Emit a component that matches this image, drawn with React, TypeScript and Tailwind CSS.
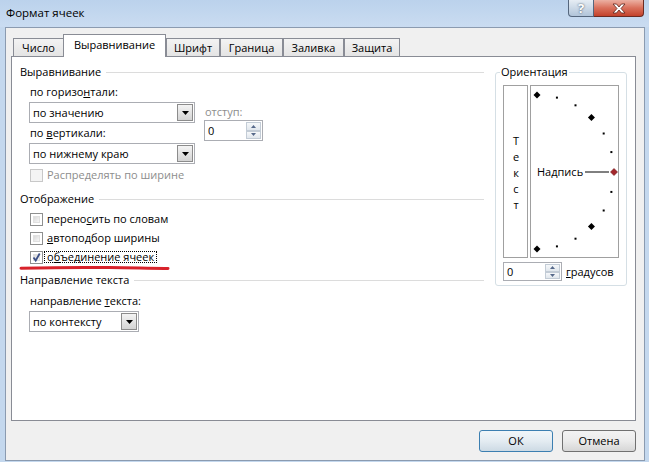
import React from "react"

function Combo({ value, w }: { value: string; w: string }) {
  return (
    <div className={`${w} h-[21px] border border-[#abadb3] bg-white flex`}>
      <div className="flex-1 pl-[3px] flex items-center">{value}</div>
      <div className="w-[16px] my-px mr-px border border-[#8c8c8c] bg-linear-to-b from-[#f4f4f4] to-[#d4d4d4] flex items-center justify-center">
        <svg width="7" height="4" viewBox="0 0 7 4">
          <path d="M0 0h7L3.5 4z" fill="#000" />
        </svg>
      </div>
    </div>
  )
}

function Spin({ w, h }: { w: string; h: string }) {
  return (
    <div className={`${w} ${h} border border-[#abadb3] bg-white flex`}>
      <div className="flex-1 pl-[3px] flex items-center">0</div>
      <div className="w-[15px] flex flex-col m-px">
        <div className="flex-1 border border-[#c3ccd6] bg-linear-to-b from-[#f6f8fa] to-[#e1e7ed] flex items-center justify-center">
          <svg width="5" height="3" viewBox="0 0 5 3">
            <path d="M0 3h5L2.5 0z" fill="#56698a" />
          </svg>
        </div>
        <div className="flex-1 border border-[#c3ccd6] bg-linear-to-b from-[#f6f8fa] to-[#e1e7ed] flex items-center justify-center">
          <svg width="5" height="3" viewBox="0 0 5 3">
            <path d="M0 0h5L2.5 3z" fill="#56698a" />
          </svg>
        </div>
      </div>
    </div>
  )
}

function Check({ checked, disabled }: { checked?: boolean; disabled?: boolean }) {
  if (disabled) {
    return <div className="w-[13px] h-[13px] border border-[#c8c8c8] bg-[#f4f4f4]" />
  }
  return (
    <div className="w-[13px] h-[13px] border border-[#8e8f8f] bg-white p-[2px]">
      <div className="w-full h-full bg-linear-to-br from-[#d9d9d9] to-[#f7f7f7] border border-[#e0e0e0] relative">
        {checked && (
          <svg width="11" height="11" viewBox="0 0 11 11" className="absolute -left-[3px] -top-[3px]">
            <path d="M2.5 5.5l2.2 3 4-7" fill="none" stroke="#3b4f86" strokeWidth="1.8" />
          </svg>
        )}
      </div>
    </div>
  )
}

function GroupTitle({ text }: { text: string }) {
  return (
    <div className="h-[16px] flex items-center">
      <span>{text}</span>
      <div className="flex-1 ml-[5px] border-t border-[#dcdcdc]" />
    </div>
  )
}

function Arc() {
  const cx = 6
  const cy = 86
  const r = 77
  const pts = [90, 75, 60, 45, 30, 15, 0, -15, -30, -45, -60, -75, -90]
  return (
    <svg width="87" height="171" viewBox="0 0 87 171" className="block">
      {pts.map((a) => {
        const x = cx + r * Math.cos((a * Math.PI) / 180)
        const y = cy - r * Math.sin((a * Math.PI) / 180)
        if (a === 0) {
          return <path key={a} d={`M${x} ${y - 3.5}L${x + 3.5} ${y}L${x} ${y + 3.5}L${x - 3.5} ${y}z`} fill="#a3262b" stroke="#6d1014" strokeWidth="0.6" />
        }
        if (a % 45 === 0) {
          return <path key={a} d={`M${x} ${y - 3.5}L${x + 3.5} ${y}L${x} ${y + 3.5}L${x - 3.5} ${y}z`} fill="#000" />
        }
        return <rect key={a} x={x - 1} y={y - 1} width="2" height="2" fill="#000" />
      })}
      <line x1="54" y1="86" x2="78" y2="86" stroke="#000" strokeWidth="1" />
      <text x="6" y="90" fontSize="11" fontFamily="'Open Sans', sans-serif" fill="#000">
        Надпись
      </text>
    </svg>
  )
}

export default function App() {
  const tabs = [
    { label: "Число", w: "w-[51px]" },
    { label: "Выравнивание", w: "w-[103px]", active: true },
    { label: "Шрифт", w: "w-[54px]" },
    { label: "Граница", w: "w-[63px]" },
    { label: "Заливка", w: "w-[61px]" },
    { label: "Защита", w: "w-[56px]" },
  ]

  return (
    <div className="w-[649px] h-[462px] bg-[#c4d8ee] flex flex-col text-[11px] leading-[16px] text-black font-['Open_Sans',sans-serif] overflow-hidden">
      {/* title bar */}
      <div className="h-[27px] flex items-start bg-linear-to-b from-[#bbd2ec] to-[#cadcf1]">
        <div className="pl-[6px] pt-[5px] text-[11.5px]">Формат ячеек</div>
        <div className="ml-auto mr-[5px] flex h-[17px]">
          <div className="w-[26px] h-full border border-[#55667d] border-t-0 rounded-bl-[4px] bg-linear-to-b from-[#e6edf4] to-[#b1c4d9] flex items-center justify-center text-[13px] font-bold text-white [text-shadow:0_0_2px_#2c3a4f]">
            ?
          </div>
          <div className="w-[50px] h-full border border-[#6b2a22] border-t-0 border-l-0 rounded-br-[4px] bg-linear-to-b from-[#ebb0a3] via-[#d96f5b] to-[#c3412b] flex items-center justify-center">
            <svg width="14" height="11" viewBox="0 0 14 11">
              <path d="M1 1h3.5L7 4l2.5-3H13L9 5.5 13 10H9.5L7 7l-2.5 3H1l4-4.5z" fill="#fff" stroke="#5a2219" strokeWidth="0.8" />
            </svg>
          </div>
        </div>
      </div>

      {/* client area */}
      <div className="ml-[5px] mr-[4px] mb-[1px] flex-1 bg-[#f0f0f0] border border-[#8b9bb0] flex flex-col">
        {/* tabs */}
        <div className="flex items-end h-[22px] mt-[6px] ml-[7px] relative z-10">
          {tabs.map((t) =>
            t.active ? (
              <div
                key={t.label}
                className={`${t.w} -ml-px h-[23px] -mb-px bg-white border border-b-0 border-[#898c95] flex items-center justify-center pb-[2px]`}
              >
                {t.label}
              </div>
            ) : (
              <div
                key={t.label}
                className={`${t.w} h-[18px] bg-linear-to-b from-[#f3f3f3] to-[#e4e4e4] border border-b-0 border-[#898c95] flex items-center justify-center`}
              >
                {t.label}
              </div>
            )
          )}
        </div>

        {/* panel */}
        <div className="ml-[5px] mr-[8px] h-[365px] bg-white border border-[#898c95] flex pl-[8px] pt-[7px]">
          {/* left column */}
          <div className="w-[464px] flex flex-col">
            <GroupTitle text="Выравнивание" />
            <div className="ml-[9px] flex flex-col">
              <div className="mt-[4px] pl-px h-[16px]">
                по горизо<u>н</u>тали:
              </div>
              <div className="flex">
                <div className="flex flex-col">
                  <div className="mt-[2px]">
                    <Combo value="по значению" w="w-[166px]" />
                  </div>
                  <div className="mt-[2px] pl-px h-[16px]">
                    по <u>в</u>ертикали:
                  </div>
                  <div className="mt-[2px]">
                    <Combo value="по нижнему краю" w="w-[166px]" />
                  </div>
                </div>
                <div className="ml-[9px] flex flex-col">
                  <div className="mt-[4px] pl-px h-[16px] text-[#8d8d8d]">отступ:</div>
                  <Spin w="w-[59px]" h="h-[21px]" />
                </div>
              </div>
              <div className="mt-[3px] ml-px h-[16px] flex items-center gap-[4px] text-[#8d8d8d]">
                <Check disabled />
                <span>Распределять по ширине</span>
              </div>
            </div>

            <div className="mt-[8px]">
              <GroupTitle text="Отображение" />
            </div>
            <div className="ml-[10px] flex flex-col">
              <div className="mt-[4px] h-[16px] flex items-center gap-[4px]">
                <Check />
                <span>
                  перено<u>с</u>ить по словам
                </span>
              </div>
              <div className="mt-[3px] h-[16px] flex items-center gap-[4px]">
                <Check />
                <span>
                  <u>а</u>втоподбор ширины
                </span>
              </div>
              <div className="mt-[3px] h-[16px] flex items-center gap-[1px] relative">
                <Check checked />
                <span className="h-[12px] border border-dotted border-black px-[2px] flex items-center">
                  о<u>б</u>ъединение ячеек
                </span>
                <svg width="152" height="6" viewBox="0 0 152 6" className="absolute -left-[11px] top-[16px]">
                  <path d="M2 3.2C30 2.6 60 2.2 90 2.6S140 3.6 149 3.4" fill="none" stroke="#d8222b" strokeWidth="3" strokeLinecap="round" />
                </svg>
              </div>
            </div>

            <div className="mt-[7px]">
              <GroupTitle text="Направление текста" />
            </div>
            <div className="ml-[9px] flex flex-col">
              <div className="mt-[5px] pl-px h-[16px]">
                направление <u>т</u>екста:
              </div>
              <div className="mt-[2px]">
                <Combo value="по контексту" w="w-[110px]" />
              </div>
            </div>
          </div>

          {/* orientation group */}
          <div className="ml-[11px] mt-[8px] w-[132px] h-[214px] border border-[#d5dfe5] rounded-[3px] relative pt-[12px] pl-[7px]">
            <div className="absolute -top-[9px] left-[4px] bg-white px-px">Ориентация</div>
            <div className="flex">
              <div className="w-[25px] h-[173px] border border-[#a0a0a0] flex items-center justify-center">
                <span className="[writing-mode:vertical-lr] [text-orientation:upright] tracking-[1px] leading-[12px] text-[11px] pt-[2px]">
                  Текст
                </span>
              </div>
              <div className="ml-[2px] w-[89px] h-[173px] border border-[#a0a0a0]">
                <Arc />
              </div>
            </div>
            <div className="mt-[4px] flex items-center">
              <Spin w="w-[59px]" h="h-[19px]" />
              <span className="ml-[4px]">
                <u>г</u>радусов
              </span>
            </div>
          </div>
        </div>

        {/* buttons */}
        <div className="mt-[9px] mr-[8px] flex justify-end gap-[9px]">
          <div className="w-[74px] h-[22px] rounded-[3px] border border-[#3c7fb1] bg-linear-to-b from-[#f1f6f9] via-[#e4ecf2] to-[#cddae4] flex items-center justify-center">
            ОК
          </div>
          <div className="w-[74px] h-[22px] rounded-[3px] border border-[#707070] bg-linear-to-b from-[#f3f3f3] via-[#ebebeb] to-[#d6d6d6] flex items-center justify-center">
            Отмена
          </div>
        </div>
      </div>
    </div>
  )
}
